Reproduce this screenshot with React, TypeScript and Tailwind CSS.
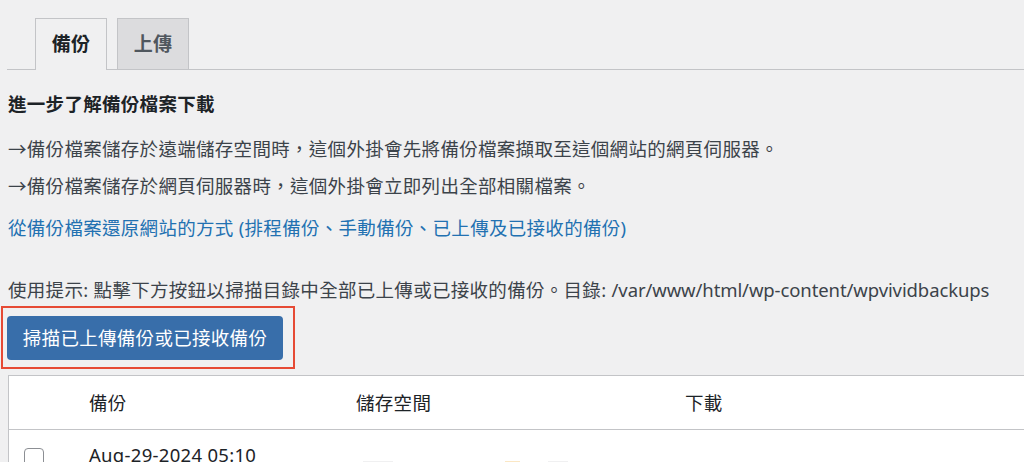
export default function App() {
  const font = { fontFamily: '"Noto Sans", "Noto Sans CJK TC", sans-serif' }
  const cjk = { fontFamily: '"Noto Sans CJK TC", sans-serif' }

  return (
    <div className="w-[1024px] h-[462px] overflow-hidden bg-[#f0f0f1] text-[#3c434a] tracking-[0.3px]" style={font}>
      <div className="pl-[7px]">
        <nav className="flex gap-[10px] pl-[28px] pt-[18px] border-b border-[#c3c4c7]">
          <div className="w-[72px] h-[52px] -mb-px flex items-center justify-center border border-b-0 border-[#c3c4c7] bg-[#f0f0f1] text-[19px] font-bold text-[#1d2327]">
            備份
          </div>
          <div className="w-[72px] h-[51px] flex items-center justify-center border border-b-0 border-[#c3c4c7] bg-[#dcdcde] text-[19px] font-bold text-[#50575e]">
            上傳
          </div>
        </nav>
      </div>

      <div className="pl-[8px]">
        <h3 className="mt-[21px] text-[18.5px] leading-[26px] font-bold text-[#1d2327]">進一步了解備份檔案下載</h3>
        <p className="mt-[18px] text-[18.5px] leading-[26px]"><span style={cjk}>→</span>備份檔案儲存於遠端儲存空間時，這個外掛會先將備份檔案擷取至這個網站的網頁伺服器。</p>
        <p className="mt-[10px] text-[18.5px] leading-[26px]"><span style={cjk}>→</span>備份檔案儲存於網頁伺服器時，這個外掛會立即列出全部相關檔案。</p>
        <p className="mt-[16px] text-[18.5px] leading-[26px] text-[#2271b1]">從備份檔案還原網站的方式 (排程備份、手動備份、已上傳及已接收的備份)</p>
        <p className="mt-[36px] text-[18.5px] leading-[26px] whitespace-nowrap">
          使用提示: 點擊下方按鈕以掃描目錄中全部已上傳或已接收的備份。目錄: <span className="tracking-[-0.1px]">/var/www/html/wp-content/wpvividbackups</span>
        </p>

        <div className="mt-[3px] -ml-[7px] w-[294px] border-2 border-[#e64a35] pt-[8px] pb-[7px] pl-[4px]">
          <button className="w-[276px] h-[44px] rounded-[4px] bg-[#386eaa] text-white text-[18.5px] flex items-center justify-center">
            掃描已上傳備份或已接收備份
          </button>
        </div>

        <div className="mt-[6px] w-[1030px] bg-white border border-[#c3c4c7] text-[18.5px]">
          <div className="flex items-center h-[54px] border-b border-[#c3c4c7] text-[#1d2327]">
            <div className="w-[80px]" />
            <div className="w-[267px]">備份</div>
            <div className="w-[329px]">儲存空間</div>
            <div>下載</div>
          </div>
          <div className="flex items-start pt-[18px] h-[60px]">
            <div className="w-[80px] pl-[15px]">
              <div className="w-[20px] h-[20px] rounded-[4px] border border-[#8c8f94] bg-white" />
            </div>
            <div className="w-[267px] -mt-[4px] leading-[22px] text-[#1d2327]">Aug-29-2024 05:10</div>
            <div className="w-[329px] pt-[13px] flex">
              <div className="w-[30px] h-[6px] ml-[7px] bg-[#f0f0f1]" />
            </div>
            <div className="pt-[13px] flex gap-[28px] -ml-[180px]">
              <div className="w-[15px] h-[6px] bg-[#fbe7c4]" />
              <div className="w-[20px] h-[6px] bg-[#f0f0f1]" />
            </div>
          </div>
        </div>
      </div>
    </div>
  )
}
